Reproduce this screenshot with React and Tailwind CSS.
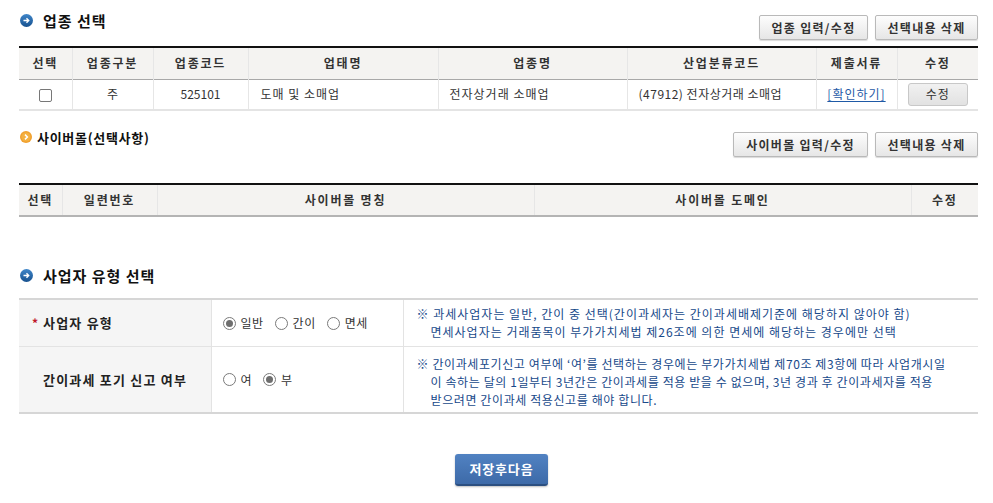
/**
 * 사업자 업종 / 사이버몰 / 사업자 유형 선택 화면
 */

function BlueIcon() {
  return (
    <svg width="13" height="13" viewBox="0 0 13 13" className="shrink-0">
      <defs>
        <linearGradient id="bg1" x1="0" y1="0" x2="0" y2="1">
          <stop offset="0" stopColor="#3f86c9" />
          <stop offset="1" stopColor="#17518f" />
        </linearGradient>
      </defs>
      <circle cx="6.5" cy="6.5" r="6.5" fill="url(#bg1)" />
      <path d="M3.5 6.5h5M6.5 4.3l2.2 2.2-2.2 2.2" stroke="#fff" strokeWidth="1.4" fill="none" />
    </svg>
  );
}

function OrangeIcon() {
  return (
    <svg width="12" height="12" viewBox="0 0 12 12" className="shrink-0">
      <circle cx="6" cy="6" r="6" fill="#f0a02e" />
      <circle cx="6" cy="6" r="4.6" fill="#f4b040" />
      <path d="M5 3.6l2.4 2.4L5 8.4" stroke="#fff" strokeWidth="1.5" fill="none" />
    </svg>
  );
}

function GrayButton({ children, width }) {
  return (
    <button
      className={`${width} h-[25px] border border-[#b9b9b9] rounded-[2px] bg-gradient-to-b from-[#fdfdfd] to-[#e6e6e6] shadow-[0_1px_1px_rgba(0,0,0,0.15)] text-[12px] font-bold text-[#333] tracking-[1.3px]`}
    >
      {children}
    </button>
  );
}

function Radio({ checked }) {
  return (
    <span className="w-[13px] h-[13px] rounded-full border border-[#7a7a7a] bg-white flex items-center justify-center shrink-0">
      {checked && <span className="w-[7px] h-[7px] rounded-full bg-[#6e6e6e]" />}
    </span>
  );
}

function RadioItem({ checked, label }) {
  return (
    <label className="flex items-center gap-[5px] text-[12px] text-[#333] tracking-[0.5px]">
      <Radio checked={checked} />
      <span>{label}</span>
    </label>
  );
}

export default function App() {
  const th = 'h-[32px] font-bold text-[12px] text-[#333] text-center tracking-[1.8px] border-l border-[#e6e6e6] first:border-l-0';
  const td = 'h-[31px] text-[12px] text-[#333] border-l border-[#e6e6e6] first:border-l-0';

  return (
    <div
      className="w-[993px] min-h-[503px] bg-white pt-[15px] pl-[19px] pr-[15px]"
      style={{ fontFamily: '"Noto Sans CJK KR", "Noto Sans", sans-serif' }}
    >
      {/* 업종 선택 */}
      <div className="flex justify-between items-start h-[31px]">
        <div className="flex items-center gap-[10px] h-[12px] -mt-[1px] pl-[1px]">
          <BlueIcon />
          <h2 className="text-[15px] font-bold text-[#111] tracking-[1px] leading-none">업종 선택</h2>
        </div>
        <div className="flex gap-[7px]">
          <GrayButton width="w-[109px]">업종 입력/수정</GrayButton>
          <GrayButton width="w-[103px]">선택내용 삭제</GrayButton>
        </div>
      </div>

      <table className="w-[959px] table-fixed border-collapse border-t-2 border-[#111]">
        <colgroup>
          <col className="w-[53px]" />
          <col className="w-[81px]" />
          <col className="w-[95px]" />
          <col className="w-[190px]" />
          <col className="w-[189px]" />
          <col className="w-[189px]" />
          <col className="w-[81px]" />
          <col className="w-[81px]" />
        </colgroup>
        <thead>
          <tr className="bg-[#f4f3f1] border-b border-[#a8a8a8]">
            <th className={th}>선택</th>
            <th className={th}>업종구분</th>
            <th className={th}>업종코드</th>
            <th className={th}>업태명</th>
            <th className={th}>업종명</th>
            <th className={th}>산업분류코드</th>
            <th className={th}>제출서류</th>
            <th className={th}>수정</th>
          </tr>
        </thead>
        <tbody>
          <tr className="border-b-2 border-[#e4e4e4]">
            <td className={`${td} text-center`}>
              <span className="inline-block w-[13px] h-[13px] border border-[#777] rounded-[2px] align-middle" />
            </td>
            <td className={`${td} text-center`}>주</td>
            <td className={`${td} text-center`}>525101</td>
            <td className={`${td} pl-[12px] tracking-[1px]`}>도매 및 소매업</td>
            <td className={`${td} pl-[11px] tracking-[1px]`}>전자상거래 소매업</td>
            <td className={`${td} pl-[11px] tracking-[0.5px]`}>(47912) 전자상거래 소매업</td>
            <td className={`${td} text-center`}>
              <a href="#" className="text-[#1f5aa6] underline underline-offset-2 tracking-[1px]">[확인하기]</a>
            </td>
            <td className={`${td} text-center`}>
              <button className="w-[60px] h-[23px] border border-[#c8c8c8] rounded-[3px] bg-gradient-to-b from-[#f1f1f1] to-[#e2e2e2] text-[12px] text-[#333] tracking-[1px]">
                수정
              </button>
            </td>
          </tr>
        </tbody>
      </table>

      {/* 사이버몰 */}
      <div className="flex justify-between items-start h-[51px] mt-[21px]">
        <div className="flex items-center gap-[5px] h-[12px] mt-[-1px] pl-[1px]">
          <OrangeIcon />
          <h2 className="text-[13px] font-bold text-[#111] tracking-[0.7px] leading-none">사이버몰(선택사항)</h2>
        </div>
        <div className="flex gap-[7px]">
          <GrayButton width="w-[135px]">사이버몰 입력/수정</GrayButton>
          <GrayButton width="w-[103px]">선택내용 삭제</GrayButton>
        </div>
      </div>

      <table className="w-[959px] table-fixed border-collapse border-t-2 border-[#111]">
        <colgroup>
          <col className="w-[43px]" />
          <col className="w-[95px]" />
          <col className="w-[377px]" />
          <col className="w-[377px]" />
          <col className="w-[67px]" />
        </colgroup>
        <thead>
          <tr className="bg-[#f4f3f1] border-b-2 border-[#b4b4b4]">
            <th className={th}>선택</th>
            <th className={th}>일련번호</th>
            <th className={th}>사이버몰 명칭</th>
            <th className={th}>사이버몰 도메인</th>
            <th className={th}>수정</th>
          </tr>
        </thead>
      </table>

      {/* 사업자 유형 선택 */}
      <div className="flex items-center gap-[10px] h-[12px] mt-[52px] pl-[1px]">
        <BlueIcon />
        <h2 className="text-[15px] font-bold text-[#111] tracking-[1px] leading-none">사업자 유형 선택</h2>
      </div>

      <table className="w-[959px] table-fixed border-collapse border-t-2 border-b-2 border-[#d6d6d6] mt-[17px]">
        <colgroup>
          <col className="w-[192px]" />
          <col className="w-[192px]" />
          <col className="w-[575px]" />
        </colgroup>
        <tbody>
          <tr className="border-b border-[#e3e3e3]">
            <td className="h-[47px] bg-[#f5f5f5] pl-[13px]">
              <div className="flex items-center text-[13px] font-bold text-[#222]">
                <span className="w-[11px] text-[#c0172a] text-[12px]">*</span>
                <span className="tracking-[1.2px]">사업자 유형</span>
              </div>
            </td>
            <td className="border-l border-[#e3e3e3] pl-[11px]">
              <div className="flex items-center gap-[11px]">
                <RadioItem checked label="일반" />
                <RadioItem label="간이" />
                <RadioItem label="면세" />
              </div>
            </td>
            <td className="border-l border-[#e3e3e3] pl-[13px] text-[12px] leading-[18px] text-[#17498a] tracking-[1px] py-[5px] whitespace-nowrap">
              <p className="pl-[14px] -indent-[14px]">
                ※ 과세사업자는 일반, 간이 중 선택(간이과세자는 간이과세배제기준에 해당하지 않아야 함)
                <br />
                면세사업자는 거래품목이 부가가치세법 제26조에 의한 면세에 해당하는 경우에만 선택
              </p>
            </td>
          </tr>
          <tr>
            <td className="h-[65px] bg-[#f5f5f5] pl-[13px]">
              <div className="flex items-center text-[13px] font-bold text-[#222]">
                <span className="w-[11px]" />
                <span className="tracking-[1.2px]">간이과세 포기 신고 여부</span>
              </div>
            </td>
            <td className="border-l border-[#e3e3e3] pl-[11px]">
              <div className="flex items-center gap-[11px]">
                <RadioItem label="여" />
                <RadioItem checked label="부" />
              </div>
            </td>
            <td className="border-l border-[#e3e3e3] pl-[13px] text-[12px] leading-[18px] text-[#17498a] tracking-[0.6px] pt-[8px] pb-[3px] align-top whitespace-nowrap">
              <p className="pl-[14px] -indent-[14px]">
                ※ 간이과세포기신고 여부에 ‘여’를 선택하는 경우에는 부가가치세법 제70조 제3항에 따라 사업개시일
                <br />
                이 속하는 달의 1일부터 3년간은 간이과세를 적용 받을 수 없으며, 3년 경과 후 간이과세자를 적용
                <br />
                받으려면 간이과세 적용신고를 해야 합니다.
              </p>
            </td>
          </tr>
        </tbody>
      </table>

      <div className="flex justify-center mt-[40px] pb-[17px] pl-[6px]">
        <button className="w-[93px] h-[32px] rounded-[3px] bg-gradient-to-b from-[#5182c2] to-[#3d6aa8] border-b-2 border-[#2c4f80] shadow-[0_1px_2px_rgba(0,0,0,0.25)] text-white text-[13px] font-bold tracking-[0.8px]">
          저장후다음
        </button>
      </div>
    </div>
  );
}
